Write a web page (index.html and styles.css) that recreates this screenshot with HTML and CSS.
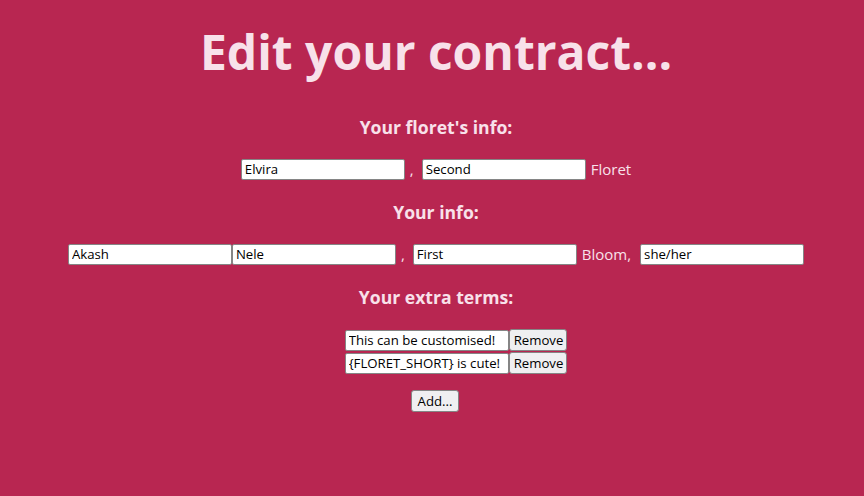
FILE: index.html
```html
<!DOCTYPE html>
<html>
<head>
<meta charset="utf-8">
<link rel="stylesheet" href="styles.css">
</head>
<body>
<h1 class="title">Edit your contract...</h1>

<section class="block">
  <h2 class="heading">Your floret's info:</h2>
  <div class="row">
    <input class="field" type="text" value="Elvira">
    <span class="sep">,</span>
    <input class="field" type="text" value="Second">
    <span class="label">Floret</span>
  </div>
</section>

<section class="block">
  <h2 class="heading">Your info:</h2>
  <div class="row">
    <input class="field" type="text" value="Akash">
    <input class="field" type="text" value="Nele">
    <span class="sep">,</span>
    <input class="field" type="text" value="First">
    <span class="label">Bloom,</span>
    <input class="field" type="text" value="she/her">
  </div>
</section>

<section class="block">
  <h2 class="heading">Your extra terms:</h2>
  <ul class="terms">
    <li class="term"><input class="field" type="text" value="This can be customised!"><button class="btn">Remove</button></li>
    <li class="term"><input class="field" type="text" value="{FLORET_SHORT} is cute!"><button class="btn">Remove</button></li>
  </ul>
  <div class="actions"><button class="btn btn-add">Add...</button></div>
</section>
</body>
</html>
```

FILE: styles.css
```css
html, body {
  margin: 0;
  padding: 0;
}
body {
  background: #b82651;
  color: #f8e1ea;
  font-family: "Open Sans", "Noto Sans", sans-serif;
  padding-left: 8px;
  text-align: center;
}
.title {
  margin: 24px 0 0;
  font-size: 48px;
  line-height: 56px;
  font-weight: 700;
}
.block {
  display: flex;
  flex-direction: column;
  align-items: center;
}
.heading {
  margin: 35px 0 0;
  font-size: 17.6px;
  line-height: 24px;
  font-weight: 700;
}
.block + .block .heading {
  margin-top: 20px;
}
.row {
  display: flex;
  align-items: center;
  justify-content: center;
  margin-top: 19px;
  height: 22px;
}
.field {
  box-sizing: border-box;
  width: 164px;
  height: 21px;
  margin: 0;
  padding: 1px 3px;
  border: 1px solid #858585;
  border-radius: 2px;
  background: #fff;
  color: #000;
  font-family: "Open Sans", "Noto Sans", sans-serif;
  font-size: 13.2px;
  outline: none;
}
.sep {
  margin: 0 8px 0 5px;
  font-size: 15px;
}
.label {
  margin: 0 0 0 5px;
  font-size: 15px;
}
.label + .field {
  margin-left: 9px;
}
.terms {
  list-style: none;
  margin: 20px 0 0;
  padding: 0 0 0 40px;
  display: flex;
  flex-direction: column;
  gap: 1px;
}
.term {
  display: flex;
  align-items: center;
}
.btn {
  box-sizing: border-box;
  height: 22px;
  margin: 0;
  padding: 0 3px 0 4px;
  border: 1px solid #858585;
  border-radius: 3px;
  background: #efeff1;
  color: #000;
  font-family: "Open Sans", "Noto Sans", sans-serif;
  font-size: 13.2px;
  line-height: 18px;
}
.btn-add {
  padding: 0 6px;
}
.actions {
  margin-top: 15px;
  padding-right: 2px;
}
```
